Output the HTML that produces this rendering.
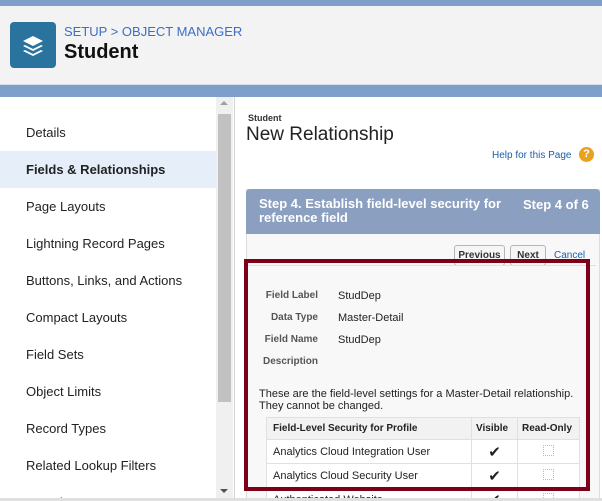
<!DOCTYPE html>
<html style="width:602px;height:501px;overflow:hidden"><head><meta charset="utf-8"><style>
*{margin:0;padding:0;box-sizing:border-box}
body{width:602px;height:501px;overflow:hidden;background:#fff;font-family:"Liberation Sans",sans-serif;position:relative}
.abs{position:absolute}
.top{left:0;top:0;width:602px;height:97px;background:#7f9fcb}
.hdr{left:0;top:6px;width:602px;height:79px;background:#f3f3f3;border-bottom:1px solid #d8dde6}
.icon{left:10px;top:22px;width:46px;height:46px;background:#2a739e;border-radius:4px}
.crumb{left:64px;top:24px;font-size:13px;color:#3a6fc4}
.title{left:64px;top:41px;font-size:20px;font-weight:bold;color:#111}
.nav{left:26px;font-size:13px;color:#222}
.sel{left:0;top:151px;width:216px;height:37px;background:#e5eef9}
.track{left:216px;top:97px;width:17px;height:404px;background:#f0f0f0}
.thumb{left:218px;top:114px;width:13px;height:288px;background:#c1c1c1}
.vline{left:234px;top:97px;width:1px;height:404px;background:#d4d4d4}
.hbot{left:0;top:498px;width:602px;height:3px;background:#e0e0e0}
.panel{left:246px;top:189px;width:354px;height:320px;background:#f8f8f8;border:1px solid #ddd}
.step{left:246px;top:189px;width:354px;height:45px;background:#8b9fc0;border-radius:4px 4px 0 0;color:#fff;font-weight:bold;font-size:13px}
.btn{top:245px;height:21px;border:1px solid #b5b5b5;border-radius:3px;background:#f6f6f6;font-size:10px;font-weight:bold;color:#333;text-align:center;line-height:19px}
.lbl{font-size:10px;font-weight:bold;color:#555;text-align:right;width:72px;left:246px}
.val{left:338px;font-size:11px;color:#222}
.red{left:244px;top:259px;width:346px;height:232px;border:4px solid #7d0018}
table{position:absolute;left:266px;top:417px;width:314px;border-collapse:collapse;font-size:11px;color:#222}
td,th{border:1px solid #e0e0e0;height:24px;padding:0 6px;background:#fff}
th{background:#f2f2f2;font-size:10px;text-align:left;height:22px}
.box{display:inline-block;width:11px;height:11px;border:1px dotted #bbb}
</style></head><body>
<div class="abs top"></div>
<div class="abs hdr"></div>
<div class="abs icon"><svg width="46" height="46" viewBox="0 0 46 46"><g fill="#fff"><path d="M23 14l10 5-10 5-10-5z"/><path d="M15 23l8 4 8-4 2 1-10 5-10-5z"/><path d="M15 28l8 4 8-4 2 1-10 5-10-5z"/></g></svg></div>
<div class="abs crumb">SETUP &gt; OBJECT MANAGER</div>
<div class="abs title">Student</div>
<div class="abs sel"></div>
<div class="abs nav" style="top:125px">Details</div>
<div class="abs nav" style="top:162px;font-weight:bold">Fields &amp; Relationships</div>
<div class="abs nav" style="top:199px">Page Layouts</div>
<div class="abs nav" style="top:236px">Lightning Record Pages</div>
<div class="abs nav" style="top:273px">Buttons, Links, and Actions</div>
<div class="abs nav" style="top:310px">Compact Layouts</div>
<div class="abs nav" style="top:347px">Field Sets</div>
<div class="abs nav" style="top:384px">Object Limits</div>
<div class="abs nav" style="top:421px">Record Types</div>
<div class="abs nav" style="top:458px">Related Lookup Filters</div>
<div class="abs nav" style="top:495px">Search Layouts</div>
<div class="abs track"></div>
<div class="abs thumb"></div>
<div class="abs" style="left:220px;top:101px;width:0;height:0;border:4px solid transparent;border-bottom:4px solid #a0a0a0;border-top:0"></div>
<div class="abs" style="left:220px;top:489px;width:0;height:0;border:4px solid transparent;border-top:4px solid #505050;border-bottom:0"></div>
<div class="abs vline"></div>
<div class="abs" style="left:248px;top:113px;font-size:9px;font-weight:bold;color:#333">Student</div>
<div class="abs" style="left:246px;top:124px;font-size:19px;color:#222">New Relationship</div>
<div class="abs" style="left:492px;top:150px;font-size:10px;color:#1a5fa8">Help for this Page</div>
<div class="abs" style="left:579px;top:147px;width:15px;height:15px;border-radius:50%;background:#e8a220;color:#fff;font-size:11px;font-weight:bold;text-align:center;line-height:15px">?</div>
<div class="abs panel"></div>
<div class="abs step"><div class="abs" style="left:13px;top:8px;line-height:14px;width:260px">Step 4. Establish field-level security for reference field</div><div class="abs" style="left:277px;top:8px">Step 4 of 6</div></div>
<div class="abs btn" style="left:454px;width:51px">Previous</div>
<div class="abs btn" style="left:510px;width:36px">Next</div>
<div class="abs" style="left:554px;top:250px;font-size:10px;color:#1a5fa8">Cancel</div>
<div class="abs" style="left:248px;top:265px;width:348px;height:1px;background:#e0e0e0"></div>
<div class="abs lbl" style="top:290px">Field Label</div><div class="abs val" style="top:290px">StudDep</div>
<div class="abs lbl" style="top:312px">Data Type</div><div class="abs val" style="top:312px">Master-Detail</div>
<div class="abs lbl" style="top:334px">Field Name</div><div class="abs val" style="top:334px">StudDep</div>
<div class="abs lbl" style="top:356px">Description</div>
<div class="abs" style="left:259px;top:388px;font-size:11px;color:#222;line-height:12px;white-space:nowrap">These are the field-level settings for a Master-Detail relationship.<br>They cannot be changed.</div>
<table>
<tr><th>Field-Level Security for Profile</th><th style="width:46px;padding:0 4px">Visible</th><th style="width:62px;padding:0 4px">Read-Only</th></tr>
<tr><td>Analytics Cloud Integration User</td><td style="text-align:center;font-size:15px">✔</td><td style="text-align:center"><span class="box"></span></td></tr>
<tr><td>Analytics Cloud Security User</td><td style="text-align:center;font-size:15px">✔</td><td style="text-align:center"><span class="box"></span></td></tr>
<tr><td>Authenticated Website</td><td style="text-align:center;font-size:15px">✔</td><td style="text-align:center"><span class="box"></span></td></tr>
</table>
<div class="abs red"></div>
<div class="abs hbot"></div>
</body></html>
